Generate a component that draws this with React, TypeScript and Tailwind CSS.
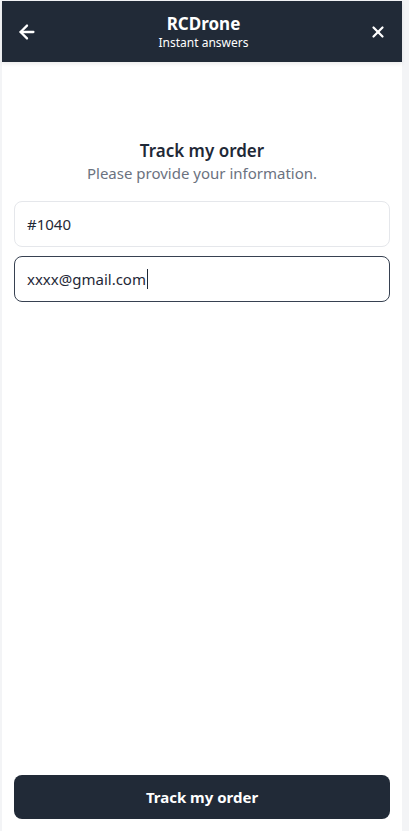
import { ArrowLeft, X } from 'lucide-react';

export default function App() {
  return (
    <div className="flex h-[831px] w-[409px] bg-[#f3f4f6] pt-px" style={{ fontFamily: '"Noto Sans", "Open Sans", sans-serif' }}>
      <div className="ml-[2px] flex h-full w-[400px] flex-col bg-white">
        {/* Header */}
        <header className="relative z-10 flex h-[61px] items-center justify-between bg-[#212a37] px-[14px] text-white shadow-[0_2px_4px_rgba(0,0,0,0.08)]">
          <ArrowLeft size={22} strokeWidth={2.5} />
          <div className="flex flex-col items-center">
            <span className="text-[17px] font-bold leading-[22px]">RCDrone</span>
            <span className="text-[12px] leading-[16px]">Instant answers</span>
          </div>
          <X size={18} strokeWidth={3} className="mr-[1px]" />
        </header>

        {/* Body */}
        <main className="flex flex-1 flex-col px-3 pt-[77px]">
          <h1 className="text-center text-[17px] font-semibold leading-6 text-[#1f2937]">Track my order</h1>
          <p className="text-center text-[15px] leading-5 text-[#6b7280]">Please provide your information.</p>

          <input
            defaultValue="#1040"
            className="mt-[18px] h-[46px] w-full rounded-lg border border-[#e5e7eb] px-[12px] text-[15px] text-[#1f2937] outline-none"
          />
          <div className="mt-[9px] flex h-[46px] w-full items-center rounded-lg border border-[#374151] px-[12px] text-[15px] text-[#1f2937]">
            <span>xxxx@gmail.com</span>
            <span className="ml-px h-[20px] w-px bg-[#1f2937]" />
          </div>
        </main>

        {/* Footer */}
        <div className="px-3 pb-3">
          <button className="h-[44px] w-full rounded-lg bg-[#212a37] text-[15px] font-bold text-white">Track my order</button>
        </div>
      </div>
    </div>
  );
}
